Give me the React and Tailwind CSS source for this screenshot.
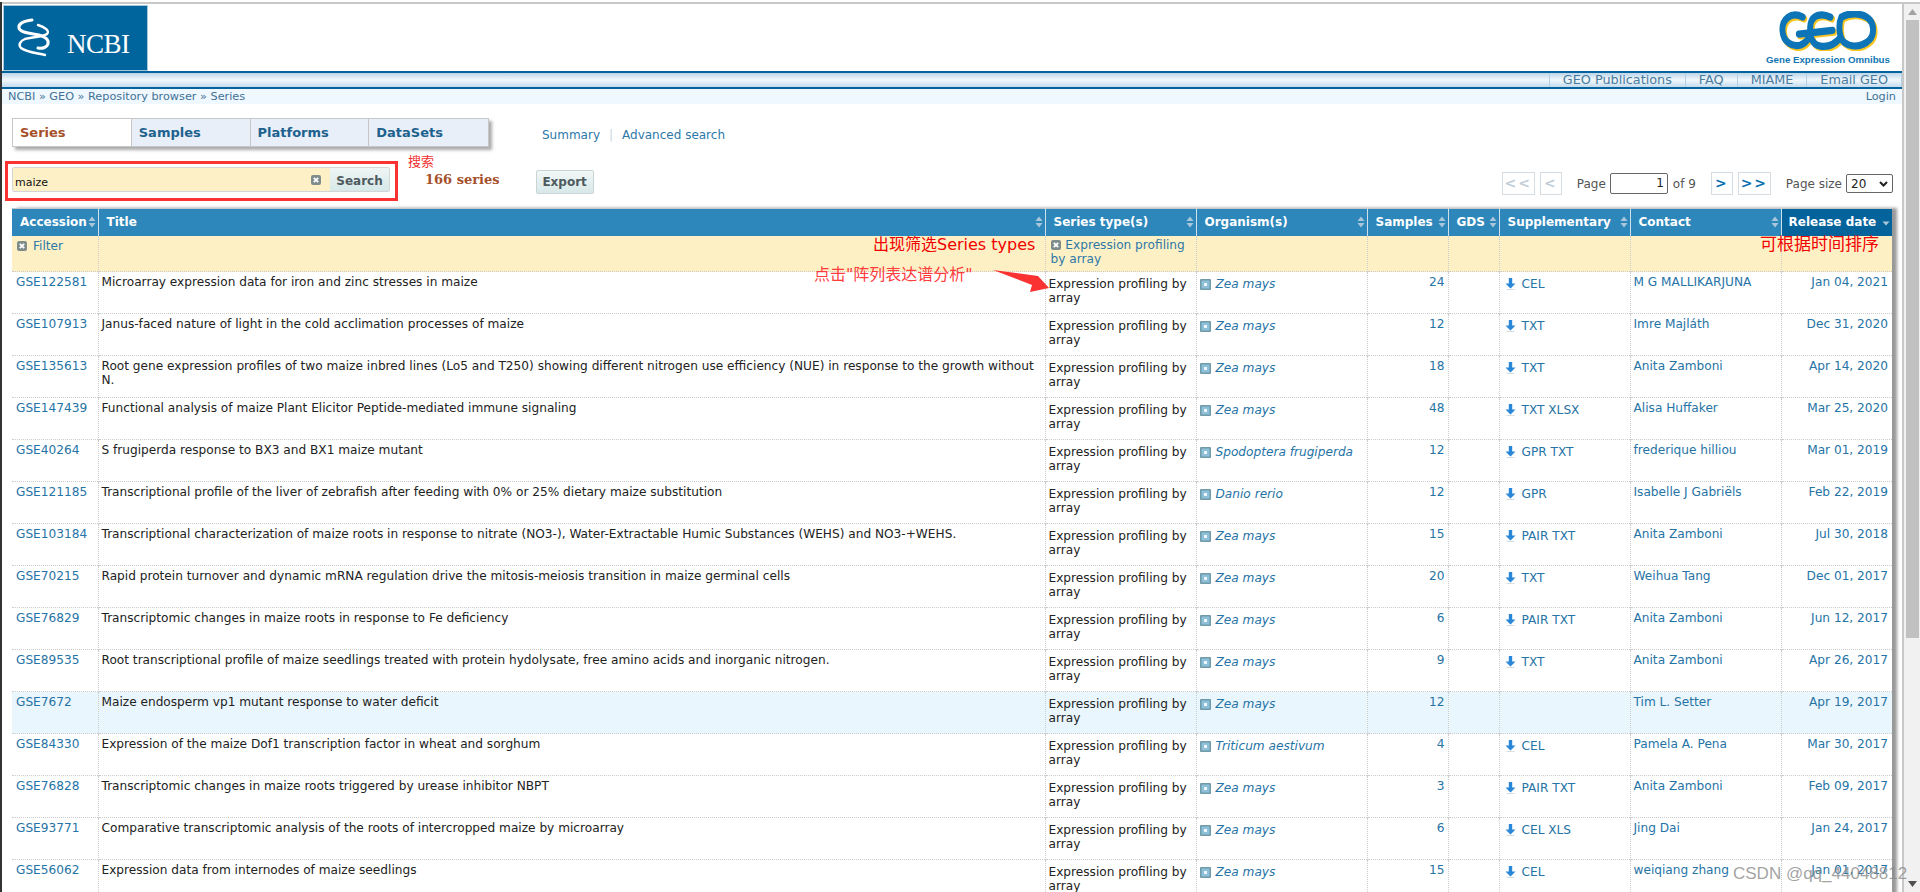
import React from "react";

const rows = [
  ["GSE122581", "Microarray expression data for iron and zinc stresses in maize", "Zea mays", 24, "CEL", "M G MALLIKARJUNA", "Jan 04, 2021"],
  ["GSE107913", "Janus-faced nature of light in the cold acclimation processes of maize", "Zea mays", 12, "TXT", "Imre Majláth", "Dec 31, 2020"],
  ["GSE135613", "Root gene expression profiles of two maize inbred lines (Lo5 and T250) showing different nitrogen use efficiency (NUE) in response to the growth without N.", "Zea mays", 18, "TXT", "Anita Zamboni", "Apr 14, 2020"],
  ["GSE147439", "Functional analysis of maize Plant Elicitor Peptide-mediated immune signaling", "Zea mays", 48, "TXT XLSX", "Alisa Huffaker", "Mar 25, 2020"],
  ["GSE40264", "S frugiperda response to BX3 and BX1 maize mutant", "Spodoptera frugiperda", 12, "GPR TXT", "frederique hilliou", "Mar 01, 2019"],
  ["GSE121185", "Transcriptional profile of the liver of zebrafish after feeding with 0% or 25% dietary maize substitution", "Danio rerio", 12, "GPR", "Isabelle J Gabriëls", "Feb 22, 2019"],
  ["GSE103184", "Transcriptional characterization of maize roots in response to nitrate (NO3-), Water-Extractable Humic Substances (WEHS) and NO3-+WEHS.", "Zea mays", 15, "PAIR TXT", "Anita Zamboni", "Jul 30, 2018"],
  ["GSE70215", "Rapid protein turnover and dynamic mRNA regulation drive the mitosis-meiosis transition in maize germinal cells", "Zea mays", 20, "TXT", "Weihua Tang", "Dec 01, 2017"],
  ["GSE76829", "Transcriptomic changes in maize roots in response to Fe deficiency", "Zea mays", 6, "PAIR TXT", "Anita Zamboni", "Jun 12, 2017"],
  ["GSE89535", "Root transcriptional profile of maize seedlings treated with protein hydolysate, free amino acids and inorganic nitrogen.", "Zea mays", 9, "TXT", "Anita Zamboni", "Apr 26, 2017"],
  ["GSE7672", "Maize endosperm vp1 mutant response to water deficit", "Zea mays", 12, "", "Tim L. Setter", "Apr 19, 2017"],
  ["GSE84330", "Expression of the maize Dof1 transcription factor in wheat and sorghum", "Triticum aestivum", 4, "CEL", "Pamela A. Pena", "Mar 30, 2017"],
  ["GSE76828", "Transcriptomic changes in maize roots triggered by urease inhibitor NBPT", "Zea mays", 3, "PAIR TXT", "Anita Zamboni", "Feb 09, 2017"],
  ["GSE93771", "Comparative transcriptomic analysis of the roots of intercropped maize by microarray", "Zea mays", 6, "CEL XLS", "Jing Dai", "Jan 24, 2017"],
  ["GSE56062", "Expression data from internodes of maize seedlings", "Zea mays", 15, "CEL", "weiqiang zhang", "Jan 01, 2017"],
];

const headers = [
  ["Accession", 86],
  ["Title", 947],
  ["Series type(s)", 151],
  ["Organism(s)", 171],
  ["Samples", 81],
  ["GDS", 51],
  ["Supplementary", 131],
  ["Contact", 151],
];

function ClearIcon() {
  return (
    <svg width="10" height="10" viewBox="0 0 10 10" className="inline-block shrink-0">
      <rect x="0" y="0" width="10" height="10" rx="2" fill="#7f8c8c" />
      <path d="M2.8 2.8l4.4 4.4M7.2 2.8L2.8 7.2" stroke="#fff" strokeWidth="1.8" />
    </svg>
  );
}

function SortIcon() {
  return (
    <svg width="8" height="12" viewBox="0 0 8 12" className="shrink-0">
      <path d="M4 0.5L7.5 5H0.5z" fill="#a9c6da" />
      <path d="M4 11.5L7.5 7H0.5z" fill="#a9c6da" />
    </svg>
  );
}

function OrgIcon() {
  return (
    <svg width="11" height="11" viewBox="0 0 11 11" className="shrink-0">
      <rect x="0" y="0" width="11" height="11" rx="1" fill="#6f9aa8" />
      <rect x="1.5" y="1.5" width="8" height="8" fill="#8fc0da" />
      <rect x="4" y="4" width="3" height="3" fill="#eef6fa" />
    </svg>
  );
}

function DownIcon() {
  return (
    <svg width="11" height="12" viewBox="0 0 11 12" className="shrink-0">
      <path d="M3.8 0h3.4v5.5H10.5L5.5 10.5 0.5 5.5H3.8z" fill="#2a86d6" />
      <rect x="1.5" y="11" width="8" height="1" fill="#d5dde3" />
    </svg>
  );
}

function NcbiLogo() {
  return (
    <div className="flex h-[66px] w-[145px] items-end gap-[15px] border border-[#a9c7da] bg-[#00659c] pb-[12px] pl-[12px]">
      <svg width="36" height="40" viewBox="0 0 36 40" className="mb-px" fill="none" stroke="#fff" strokeLinecap="round">
        <path d="M16 3C7 4 2 7 3 11 4 16 15 16 23 18 30 20 33 23 32 27 31 30 27 32 22 31" strokeWidth="3" />
        <path d="M22 8C29 10 34 14 31 17 27 20 15 20 9 22 4 24 2 28 5 31 10 35 21 36 29 38" strokeWidth="2.4" />
      </svg>
      <span className="text-[27px] leading-none tracking-[-0.5px] text-white font-['Liberation_Serif',serif]">NCBI</span>
    </div>
  );
}

function GeoLogo() {
  const strokes = (
    <>
      <path d="M24 5C12 0 3 7 3.5 16 4 26 14 30 22 28 28 26 31 22 31 18" />
      <path d="M20 19L54 16" />
      <path d="M52 5C42 1 34 4 32 10 30 20 33 28 42 29 50 30 57 27 62 22" />
      <path d="M63 5C75 0 96 2 95 16 95 28 75 32 66 26 60 22 60 10 63 5z" />
    </>
  );
  return (
    <div className="flex w-[140px] flex-col items-center">
      <svg width="99" height="40" viewBox="0 0 100 33" preserveAspectRatio="none" fill="none" strokeLinecap="round">
        <g stroke="#f7c520" strokeWidth="6" transform="translate(1.5 1.5)">{strokes}</g>
        <g stroke="#0d74b8" strokeWidth="6">{strokes}</g>
      </svg>
      <span className="mt-[2px] whitespace-nowrap text-[9.7px] font-bold leading-[14px] text-[#0f76b2] font-['Liberation_Sans',sans-serif]">
        Gene Expression Omnibus
      </span>
    </div>
  );
}

function Tab({ label, active = false }) {
  return (
    <div
      className={`flex h-full w-[119px] items-center border-r border-[#c7c7c7] pl-[7px] text-[13px] font-bold last:border-r-0 ${
        active ? "bg-white text-[#a5502b]" : "bg-[#e9eff8] text-[#1d628f]"
      }`}
    >
      {label}
    </div>
  );
}

function PageButton({ label, disabled = false, className = "" }) {
  return (
    <div
      className={`flex h-[23px] items-center justify-center border border-[#d5dde3] text-[14px] font-bold tracking-[2px] ${
        disabled ? "text-[#c2cdd6]" : "text-[#0a6fb0]"
      } ${className}`}
    >
      {label}
    </div>
  );
}

function HeaderBar() {
  return (
    <>
      <div className="flex h-[67px] items-start justify-between pl-px pt-px">
        <NcbiLogo />
        <div className="mr-[4px] pt-[6px]">
          <GeoLogo />
        </div>
      </div>
      <div className="flex h-[18px] justify-end border-y-2 border-[#04629c] bg-gradient-to-b from-[#bcd6ea] via-[#f2f8fc] to-[#c3dbee] text-[12.8px] leading-[14px] text-[#4a7b9d]">
        <div className="border-l border-[#b5d0e4] px-[13px]">GEO Publications</div>
        <div className="border-l border-[#b5d0e4] px-[13px]">FAQ</div>
        <div className="border-l border-[#b5d0e4] px-[13px]">MIAME</div>
        <div className="border-x border-[#b5d0e4] px-[13px]">Email GEO</div>
      </div>
      <div className="flex h-[15px] items-start justify-between bg-[#eff8fe] pl-[6px] pr-[6px] pt-[1px] text-[11.25px] leading-[14px] text-[#3f7196]">
        <div>NCBI » GEO » Repository browser » Series</div>
        <div>Login</div>
      </div>
    </>
  );
}

function Toolbar() {
  return (
    <>
      <div className="mt-[14px] flex items-center pl-[10px]">
        <div className="flex h-[29px] w-[477px] border border-[#c7c7c7] shadow-[3px_3px_3px_#aaa]">
          <Tab label="Series" active />
          <Tab label="Samples" />
          <Tab label="Platforms" />
          <Tab label="DataSets" />
        </div>
        <div className="ml-[53px] mt-[4px] flex text-[12px] text-[#2d78a8]">
          <span>Summary</span>
          <span className="mx-[9px] text-[#c5d5e0]">|</span>
          <span>Advanced search</span>
        </div>
      </div>
      <div className="mt-[14px] flex h-[40px] items-center pl-[3px]">
        <div className="flex h-[40px] w-[393px] items-center border-[3px] border-[#fb3232] pb-[3px] pl-[4px]">
          <div className="flex h-[25px] w-[378px] overflow-hidden rounded-[2px] border border-[#d5d5d5]">
            <div className="flex flex-1 items-center justify-between bg-[#fdf0c7] pl-[2px] pr-[9px] text-[11px] text-[#111]">
              <span className="pt-[8px]">maize</span>
              <ClearIcon />
            </div>
            <div className="flex w-[59px] items-center justify-center bg-gradient-to-b from-[#f0f5f5] to-[#d5e8e8] pt-[2px] text-[12px] font-bold text-[#4d5a5d]">
              Search
            </div>
          </div>
        </div>
        <div className="ml-[27px] mt-[-2px] text-[13px] font-bold text-[#a5502b] font-['DejaVu_Serif',serif]">166 series</div>
        <div className="ml-[36px] mt-[2px] flex h-[24px] w-[58px] items-center justify-center rounded-[2px] border border-[#c9d5d5] bg-gradient-to-b from-[#f2f7f7] to-[#d7e8e8] text-[12px] font-bold text-[#4d5a5d]">
          Export
        </div>
        <div className="ml-auto mr-[9px] mt-[5px] flex items-center text-[12px] text-[#555]">
          <PageButton label="<<" disabled className="w-[33px]" />
          <PageButton label="<" disabled className="ml-[5px] w-[22px]" />
          <span className="ml-[15px]">Page</span>
          <div className="ml-[4px] h-[21px] w-[58px] rounded-[2px] border border-[#666] pr-[3px] text-right leading-[19px] text-[#222]">1</div>
          <span className="ml-[5px]">of 9</span>
          <PageButton label=">" className="ml-[15px] w-[22px]" />
          <PageButton label=">>" className="ml-[5px] w-[33px]" />
          <span className="ml-[15px]">Page size</span>
          <div className="ml-[4px] flex h-[19px] w-[47px] items-center justify-between rounded-[2px] border border-[#666] px-[4px] text-[#222]">
            <span>20</span>
            <svg width="9" height="6" viewBox="0 0 9 6" fill="none" stroke="#222" strokeWidth="2"><path d="M1 1l3.5 3.5L8 1" /></svg>
          </div>
        </div>
      </div>
    </>
  );
}

function SeriesTable() {
  return (
    <div className="ml-[10px] mt-[7px] w-[1880px] shadow-[5px_0_3px_#999]">
      <table className="w-full table-fixed border-collapse text-[12.15px]">
        <colgroup>
          {headers.map(([name, width]) => (
            <col key={name} style={{ width }} />
          ))}
          <col style={{ width: 111 }} />
        </colgroup>
        <thead>
          <tr className="h-[27px] border-t border-[#c8c8c8] bg-[#2d87bb] text-left text-[12px] text-white">
            {headers.map(([name]) => (
              <th key={name} className="border-r border-[#cfe0ec] py-0 pl-[8px] pr-[2px] font-bold">
                <div className="flex items-center justify-between">
                  <span>{name}</span>
                  <SortIcon />
                </div>
              </th>
            ))}
            <th className="bg-[#05639c] py-0 pl-[7px] pr-[2px] font-bold">
              <div className="flex items-center justify-between">
                <span>Release date</span>
                <svg width="8" height="5" viewBox="0 0 8 5" className="mt-[2px]"><path d="M0.5 0.5h7L4 4.5z" fill="#a9c6da" /></svg>
              </div>
            </th>
          </tr>
          <tr className="h-[36px] bg-[#fdf0c5] align-top font-normal">
            <td className="border-r border-dotted border-[#ccc] px-[5px] pt-[1px] text-[#2d78a8]">
              <div className="flex items-center gap-[6px]"><ClearIcon /><span>Filter</span></div>
            </td>
            <td className="border-r border-dotted border-[#ccc]" />
            <td className="border-r border-dotted border-[#ccc] px-[5px] pt-[2px] leading-[14px] text-[#2d78a8]">
              <ClearIcon /> <span className="ml-px">Expression profiling by array</span>
            </td>
            <td className="border-r border-dotted border-[#ccc]" />
            <td className="border-r border-dotted border-[#ccc]" />
            <td className="border-r border-dotted border-[#ccc]" />
            <td className="border-r border-dotted border-[#ccc]" />
            <td className="border-r border-dotted border-[#ccc]" />
            <td />
          </tr>
        </thead>
        <tbody>
          {rows.map((r) => (
            <tr
              key={r[0]}
              className={`h-[42px] border-t border-dotted border-[#ccc] align-top ${r[0] === "GSE7672" ? "bg-[#eaf6fd]" : "bg-white"}`}
            >
              <td className="border-r border-dotted border-[#ccc] pl-[4px] pt-[3px] leading-[14px] text-[#2673a6]">{r[0]}</td>
              <td className="border-r border-dotted border-[#ccc] px-[3px] pt-[3px] leading-[14px] text-[#222]">{r[1]}</td>
              <td className="border-r border-dotted border-[#ccc] px-[3px] pt-[5px] leading-[14px] text-[#222]">Expression profiling by array</td>
              <td className="border-r border-dotted border-[#ccc] px-[3px] pt-[5px] leading-[14px] text-[#2673a6]">
                <div className="flex items-center gap-[5px]"><OrgIcon /><i>{r[2]}</i></div>
              </td>
              <td className="border-r border-dotted border-[#ccc] px-[3px] pt-[3px] text-right leading-[14px] text-[#2673a6]">{r[3]}</td>
              <td className="border-r border-dotted border-[#ccc]" />
              <td className="border-r border-dotted border-[#ccc] px-[5px] pt-[5px] leading-[14px] text-[#2673a6]">
                {r[4] && <div className="flex items-center gap-[6px]"><DownIcon /><span>{r[4]}</span></div>}
              </td>
              <td className="border-r border-dotted border-[#ccc] px-[3px] pt-[3px] leading-[14px] text-[#2673a6]">{r[5]}</td>
              <td className="pl-[3px] pr-[4px] pt-[3px] text-right leading-[14px] text-[#2673a6]">{r[6]}</td>
            </tr>
          ))}
        </tbody>
      </table>
    </div>
  );
}

function Annotations() {
  return (
    <>
      <div className="absolute left-[408px] top-[152px] text-[13px] text-[#f03030]">搜索</div>
      <div className="absolute left-[873px] top-[233px] text-[16px] text-[#f00000]">出现筛选Series types</div>
      <div className="absolute left-[814px] top-[263px] text-[16px] text-[#ff3c3c]">点击"阵列表达谱分析"</div>
      <svg className="absolute left-[990px] top-[268px]" width="62" height="28" viewBox="0 0 62 28">
        <path d="M3 2L48 8 59 20 40 24 42 17z" fill="#fb3232" />
      </svg>
      <div className="absolute left-[1760px] top-[232px] text-[17px] text-[#f00000]">可根据时间排序</div>
      <div className="absolute left-[1733px] top-[861px] text-[17px] text-[#8a8a8a]/80 font-['Liberation_Sans',sans-serif]">CSDN @qq_44048812</div>
    </>
  );
}

function Scrollbar() {
  return (
    <div className="flex w-[18px] shrink-0 flex-col items-center border-l-2 border-t-2 border-[#c8c8c8] bg-[#f1f1f1] pl-px">
      <svg width="9" height="6" viewBox="0 0 9 6" className="mt-[5px]"><path d="M4.5 0L9 6H0z" fill="#a3a3a3" /></svg>
      <div className="mt-[5px] h-[618px] w-[13px] bg-[#c1c1c1]" />
      <svg width="9" height="6" viewBox="0 0 9 6" className="mb-[5px] mt-auto"><path d="M4.5 6L9 0H0z" fill="#505050" /></svg>
    </div>
  );
}

export default function App() {
  return (
    <div className="relative flex h-[892px] overflow-hidden bg-white pt-[2px] text-[11px] font-['DejaVu_Sans','Noto_Sans_CJK_SC',sans-serif]">
      <div className="w-[2px] shrink-0 bg-[#333]" />
      <div className="min-w-0 flex-1 overflow-hidden border-t-[2px] border-[#c8c8c8]">
        <HeaderBar />
        <Toolbar />
        <SeriesTable />
      </div>
      <Scrollbar />
      <Annotations />
    </div>
  );
}
